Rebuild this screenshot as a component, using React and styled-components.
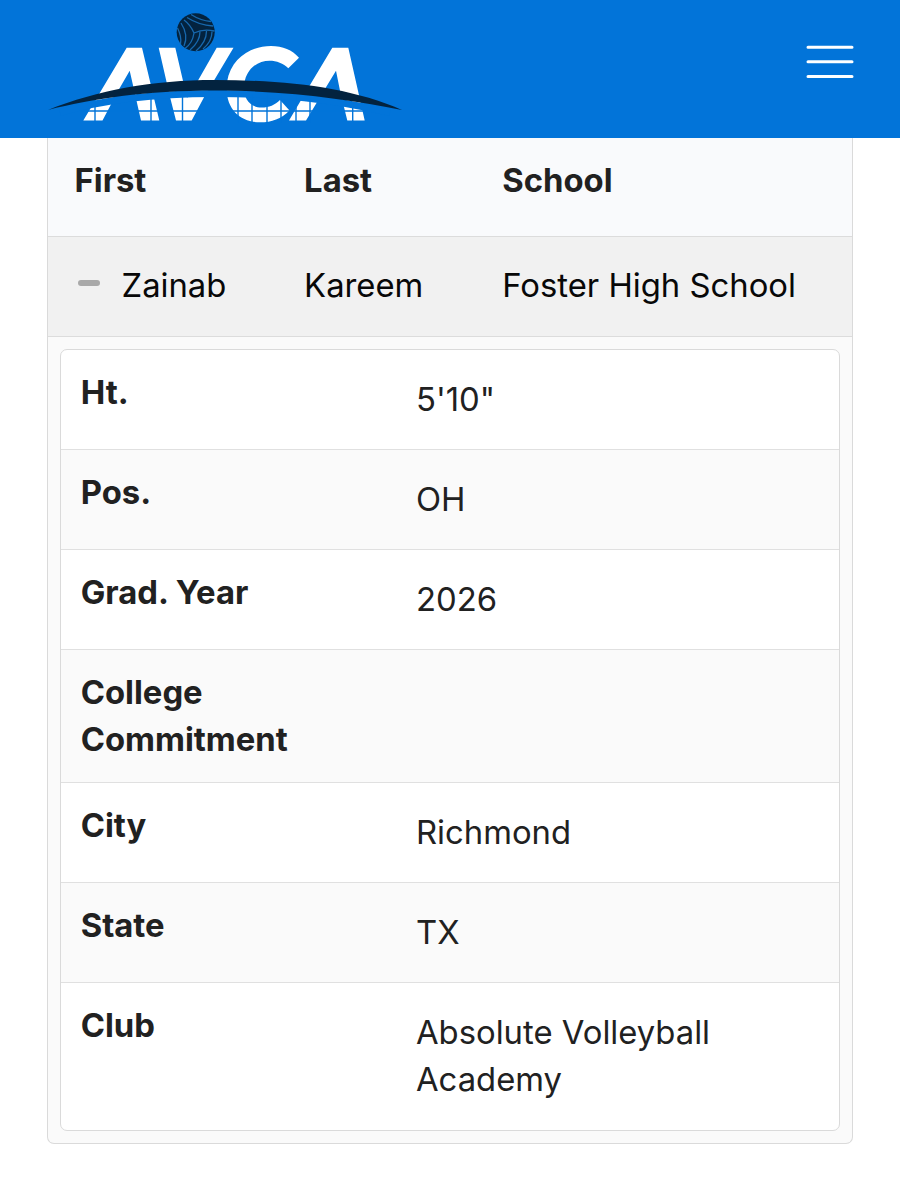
import React from "react";
import styled, { createGlobalStyle } from "styled-components";

const Global = createGlobalStyle`
  * { box-sizing: border-box; }
  body { margin: 0; background: #fff; }
`;
const Page = styled.div`
  min-height: 1200px;
  font-family: Inter, sans-serif;
  font-size: 32.8px;
  line-height: 46.67px;
  color: #212121;
`;
const Header = styled.header`
  display: flex;
  justify-content: space-between;
  align-items: flex-start;
  height: 138.4px;
  padding: 12px 46.5px 0 48px;
  background: #0274d9;
`;
const Logo = styled.svg`
  display: block;
  width: 356px;
  height: 112px;
`;
const MenuButton = styled.button`
  margin: 33px 0 0;
  padding: 0;
  border: 0;
  background: none;
`;
const MenuIcon = styled.svg`
  display: block;
  width: 48px;
  height: 34px;
`;
const Table = styled.main`
  margin: 0 47px;
  border: 1.5px solid #dadada;
  border-top: 0;
  border-radius: 0 0 7px 7px;
  background: #fafafa;
`;
const Row = styled.div`
  display: grid;
  grid-template-columns: 229.6px 198.2px 1fr;
  height: ${(p) => (p.$head ? 98.6 : 100)}px;
  padding: ${(p) => (p.$head ? 18.6 : 25)}px 0 0 26.5px;
  border-bottom: 1px solid #dcdcdc;
  background: ${(p) => (p.$head ? "#f9fafc" : "#f1f1f1")};
  color: ${(p) => (p.$head ? "#212121" : "#080808")};
  font-weight: ${(p) => (p.$head ? 700 : 400)};
`;
const NameCell = styled.span`
  display: flex;
`;
const Minus = styled.span`
  width: 22px;
  height: 6px;
  margin: 18.5px 22px 0 3px;
  border-radius: 3px;
  background: #a9a9a9;
`;
const Details = styled.dl`
  margin: 12px;
  border: 1.5px solid #dadada;
  border-radius: 7px;
  background: #fff;
  overflow: hidden;
`;
const Detail = styled.div`
  display: grid;
  grid-template-columns: 335.3px 1fr;
  height: ${(p) => p.$h}px;
  padding: 18.8px 20px 0 19.7px;
  border-bottom: 1px solid #e0e0e0;
  &:nth-child(even) { background: #fafafa; }
  &:last-child { border-bottom: 0; }
`;
const Label = styled.dt`
  max-width: 250px;
  font-weight: 700;
`;
const Value = styled.dd`
  margin: 7px 0 0;
`;

const details = [
  ["Ht.", "5'10\"", 100.2],
  ["Pos.", "OH", 100],
  ["Grad. Year", "2026", 100],
  ["College Commitment", "", 132.9],
  ["City", "Richmond", 100],
  ["State", "TX", 100],
  ["Club", "Absolute Volleyball Academy", 147],
];

function AvcaLogo() {
  return (
    <Logo viewBox="48 12 356 112" role="img" aria-label="AVCA">
      <g fill="#fff">
        <path d="M126.7 47.7H142L159.3 120.5H141L129.7 70.7L119 89.3L102.5 120.5H83.3Z" />
        <path d="M158.7 47.7H175.3L183.5 83L187 98L198.3 80L216.7 47.7H233.5L204 97.3L191.7 120.5H176L170 97Z" />
        <path d="M299 57.7L288.3 68.3C276 56 251 58 245 80C241 91 246 107.5 261.7 107.5C269 107.5 275 105 280 100L289.5 110.5C281 119 272 122.3 260 122.3C240 122.3 224 109 227 82C231 58 251 46 271 46C283 46 292 50 299 57.7Z" />
        <path d="M332.3 47.7H348.3L364.7 120.5H347.3L340 90.7L336 70.7L326 87.3L306 120.5H289L310 85Z" />
      </g>
      <path
        d="M60 109C100 97 150 90 215 90C280 90 330 95 390 109"
        transform="translate(0 3.5)"
        fill="none"
        stroke="#0274d9"
        strokeWidth="7"
      />
      <path
        d="M80 111H375M95 100V123M151 97V123M182.5 94V123M238 94V123M252 94V123M267 94V123M281 94V123M296 96V123M310 98V123M352.7 102V123"
        fill="none"
        stroke="#0274d9"
        strokeWidth="1.4"
      />
      <path
        d="M48 110C98 90 152 80 215 80C285 80 350 87 402 110C352 100 290 90.6 215 90.6C145 90.6 92 99 48 110Z"
        fill="#03233f"
      />
      <circle cx="195.7" cy="32.3" r="19" fill="#03233f" />
      <g fill="none" stroke="#1768ad" strokeWidth="1.3">
        <path d="M194 33C191.5 27 188 23 184 20M194 33C200 30 208 29.5 214.5 31M194 33C193 40 190 45 185 48.5" />
        <path d="M191 14.5C198 19 205 21 211 21.5M187 17.5C194 22 204 25.5 213 26" />
        <path d="M177.5 28C180 33 181.5 39 180.5 44M181 23C185.5 30 187.5 38 184 46" />
        <path d="M200 31.5C200 38 196 45 190 50M206.5 31C206.5 38 203 45 196 51M212 31.5C212 38 209 44 203 49" />
      </g>
    </Logo>
  );
}

export default function App() {
  return (
    <Page>
      <Global />
      <Header>
        <AvcaLogo />
        <MenuButton aria-label="Menu">
          <MenuIcon viewBox="0 0 48 34">
            <path
              d="M2 2.2H46M2 16.8H46M2 31.4H46"
              stroke="#fff"
              strokeWidth="3"
              strokeLinecap="round"
            />
          </MenuIcon>
        </MenuButton>
      </Header>
      <Table>
        <Row $head>
          <span>First</span>
          <span>Last</span>
          <span>School</span>
        </Row>
        <Row>
          <NameCell>
            <Minus />
            Zainab
          </NameCell>
          <span>Kareem</span>
          <span>Foster High School</span>
        </Row>
        <Details>
          {details.map(([label, value, h]) => (
            <Detail key={label} $h={h}>
              <Label>{label}</Label>
              <Value>{value}</Value>
            </Detail>
          ))}
        </Details>
      </Table>
    </Page>
  );
}
